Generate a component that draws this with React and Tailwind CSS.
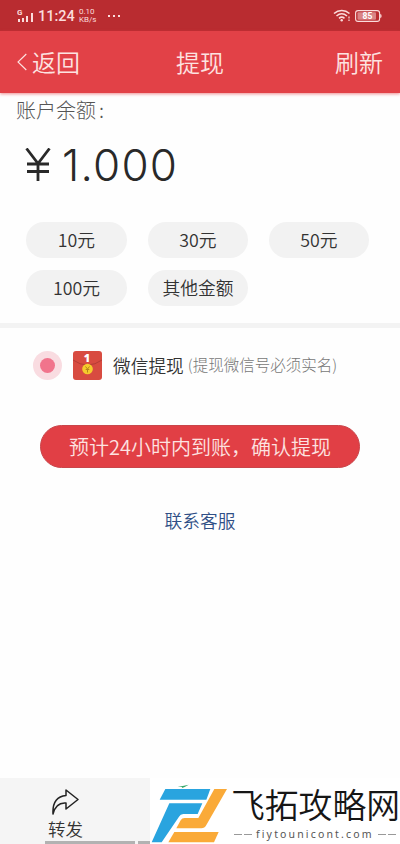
import React from 'react'

const amounts = ['10元', '30元', '50元', '100元', '其他金额']

function StatusBar() {
  return (
    <div className="h-[31px] bg-[#b92c30] flex items-center justify-between pl-[17px] pr-[18px] font-normal text-[#fbdcdc]">
      <div className="flex items-center">
        <svg width="17" height="15" viewBox="0 0 17 15" fill="currentColor">
          <text x="0" y="7" fontSize="8" fontWeight="700" fontFamily="Roboto, sans-serif">G</text>
          <rect x="1" y="11" width="2" height="3" />
          <rect x="5" y="10" width="2" height="4" />
          <rect x="9" y="8" width="2" height="6" />
          <rect x="14" y="5" width="2" height="9" />
        </svg>
        <span className="ml-[4px] mt-[3px] w-[37px] text-[14.5px] leading-none whitespace-nowrap font-[Roboto,sans-serif] font-medium">11:24</span>
        <div className="ml-[4px] w-[18px] text-[8px] leading-[8px] whitespace-nowrap font-[Roboto,sans-serif]">
          <div>0.10</div>
          <div>KB/s</div>
        </div>
        <div className="ml-[11px] flex gap-[3px]">
          <i className="w-[2px] h-[2px] bg-current" />
          <i className="w-[2px] h-[2px] bg-current" />
          <i className="w-[2px] h-[2px] bg-current" />
        </div>
      </div>
      <div className="flex items-center gap-[4px]">
        <svg width="18" height="13" viewBox="0 0 18 13" fill="none" stroke="currentColor" strokeWidth="1.6">
          <path d="M1 4.500C5.500.5 12 .5 16.500 4.500" />
          <path d="M3.500 7C7 4 10.500 4 14 7" />
          <path d="M6 9.300C7.800 7.800 9.700 7.800 11.500 9.300" />
          <circle cx="8.700" cy="11.300" r="1.200" fill="currentColor" stroke="none" />
          <path d="M16 7.500v2M16 10.500v1.500" strokeWidth="1.200" />
        </svg>
        <svg width="27" height="12" viewBox="0 0 27 12">
          <rect x=".6" y=".6" width="24" height="10.800" rx="2.500" fill="none" stroke="currentColor" strokeWidth="1.100" />
          <rect x="2.500" y="2.300" width="18.500" height="7.400" rx="1" fill="currentColor" opacity=".5" />
          <path d="M25.200 4q1.400 0 1.400 2t-1.400 2z" fill="currentColor" />
          <text x="12.500" y="9" fontSize="8.500" fontWeight="700" textAnchor="middle" fill="#fff" fontFamily="Roboto, sans-serif">85</text>
        </svg>
      </div>
    </div>
  )
}

function Header() {
  return (
    <header className="h-[62px] bg-[#e24147] shadow-[0_1px_3px_rgba(226,65,71,0.6)] grid grid-cols-3 items-center pl-[17px] pr-[17px] text-[24px] font-[350] text-[#fde3e1]">
      <div className="flex items-center gap-[5px]">
        <svg width="10" height="18" viewBox="0 0 10 18" fill="none" stroke="currentColor" strokeWidth="1.100">
          <path d="M9.300 1L1 9l8.300 8" />
        </svg>
        <span>返回</span>
      </div>
      <div className="text-center">提现</div>
      <div className="text-right">刷新</div>
    </header>
  )
}

function RedPacket() {
  return (
    <svg className="ml-[11px]" width="29" height="29" viewBox="0 0 29 29">
      <rect width="29" height="29" rx="3" fill="#d84b40" />
      <path d="M0 9Q7 14 14.500 14T29 9" fill="none" stroke="#b53d35" strokeWidth="1" />
      <circle cx="14.500" cy="18" r="5.300" fill="#f5cc2c" />
      <path d="M12.500 15.500l2 2.500 2-2.500M14.500 18v3.500M12.700 18.500h3.600" fill="none" stroke="#b5851b" strokeWidth="1" />
      <text x="14" y="11" fontSize="11" fontWeight="900" textAnchor="middle" fill="#fff" fontFamily="Noto Sans, sans-serif">1</text>
    </svg>
  )
}

function SiteLogo() {
  return (
    <svg className="absolute left-[-5px] top-[-3px]" width="95" height="69" viewBox="0 0 285 207">
      <path d="M98 34l15-1 18-4-12 7-9 4 2-4z" fill="#39a96b" />
      <path d="M61 42h135l-12 32H44z" fill="#29a4df" />
      <path d="M73 85h99l-14 32h-43q-9 0-13 8L50 202H20z" fill="#29a4df" />
      <path d="M208 42h38l-62 108q-5 10-15 10H94l13-24q4-7 12-7h41z" fill="#faaa38" />
      <path d="M88 171h133l-14 31H70z" fill="#faaa38" />
    </svg>
  )
}

export default function App() {
  return (
    <div className="relative w-[400px] h-[844px] overflow-hidden flex flex-col bg-[#fefefe] font-['Noto_Sans_CJK_SC',sans-serif] font-[350] text-[#333]">
      <StatusBar />
      <Header />

      <section className="h-[230px] pt-[2px]">
        <div className="pl-[16px] h-[30px] leading-[30px] text-[20px] font-light text-[#555] whitespace-nowrap">
          账户余额<span className="ml-[3px]">:</span>
        </div>
        <div className="h-[76px] pt-[3px] pl-[25px] flex items-center text-[44px] leading-none font-light text-[#292929] font-[Inter,sans-serif]">
          <svg className="mr-[10px]" width="27" height="33" viewBox="0 0 27 33" fill="none" stroke="currentColor" strokeWidth="2.800">
            <path d="M1.500 .5l11.500 15L24.500 .5M13 15v18M2 16h22M2 23.500h22" />
          </svg>
          <span className="tracking-[1.200px]">1.000</span>
        </div>
        <div className="mt-[21px] ml-[26px] grid grid-cols-[101px_100px_100px] gap-x-[21px] gap-y-[12px]">
          {amounts.map((label) => (
            <button key={label} className="h-[36px] rounded-full bg-[#f2f2f2] text-[17.800px] leading-[34px] pb-[2px]">
              {label}
            </button>
          ))}
        </div>
      </section>

      <div className="h-[5px] bg-[#f3f3f3]" />

      <section className="h-[74px] pl-[33px] flex items-center">
        <span className="w-[29px] h-[29px] rounded-full bg-[#f9dce1] flex items-center justify-center">
          <span className="w-[15px] h-[15px] rounded-full bg-[#f1748c]" />
        </span>
        <RedPacket />
        <span className="ml-[11px] text-[17.700px] whitespace-nowrap">微信提现</span>
        <span className="ml-[4px] text-[15.500px] font-light text-[#777] whitespace-nowrap">(提现微信号必须实名)</span>
      </section>

      <button className="mt-[23px] ml-[40px] w-[320px] h-[43px] rounded-full bg-[#e13f45] border border-[#c9454a] text-[20px] leading-[40px] text-[#fde3e1] whitespace-nowrap">
        预计24小时内到账，确认提现
      </button>
      <a className="mt-[39px] text-center text-[17.700px] leading-[26px] text-[#2f4f86]">联系客服</a>

      <footer className="mt-auto h-[66px] bg-[#f5f5f5] flex">
        <div className="w-[150px] flex flex-col">
          <svg className="mt-[11px] ml-[51px]" width="28" height="27" viewBox="0 0 28 27" fill="none" stroke="#222" strokeWidth="1.500" strokeLinejoin="round">
            <path d="M15 1l12 9.500L15 20v-6Q5 13 2 25 1 8 15 6.500z" />
          </svg>
          <span className="ml-[48px] mt-[1px] text-[17.500px] leading-[24px]">转发</span>
          <div className="mt-auto ml-[45px] h-[3px] flex gap-[3px]">
            <i className="w-[90px] bg-[#b2b2b2]" />
            <i className="flex-1 bg-[#b2b2b2]" />
          </div>
        </div>
        <div className="relative flex-1 bg-white">
          <SiteLogo />
          <div className="ml-[81px] mt-[5px] w-[169px] text-[33.800px] leading-[42px] text-[#161616] whitespace-nowrap">飞拓攻略网</div>
          <div className="ml-[84px] mt-[2px] flex items-center gap-[4px] text-[10.500px] leading-[15px] font-normal text-[#555] whitespace-nowrap">
            <span className="flex gap-[2px]"><i className="w-[8px] h-px bg-[#999]" /><i className="w-[8px] h-px bg-[#999]" /></span>
            <span className="w-[118px] tracking-[2.150px] font-['Noto_Sans',sans-serif]">fiytounicont.com</span>
            <span className="flex gap-[2px]"><i className="w-[8px] h-px bg-[#999]" /><i className="w-[8px] h-px bg-[#999]" /></span>
          </div>
        </div>
      </footer>
    </div>
  )
}
